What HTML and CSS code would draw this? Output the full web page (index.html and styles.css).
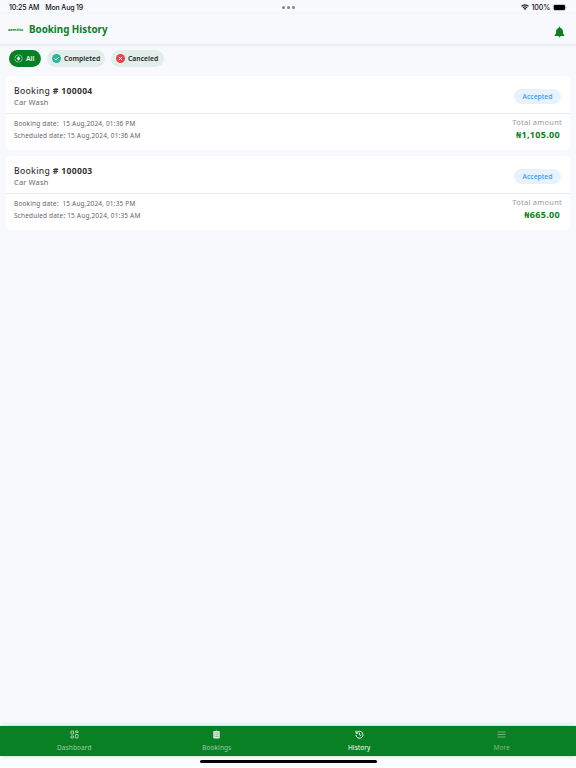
FILE: index.html
```html
<!DOCTYPE html>
<html lang="en">
<head>
    <meta charset="UTF-8">
    <meta name="viewport" content="width=device-width, initial-scale=1.0">
    <title>Booking History</title>
    <link rel="stylesheet" href="styles.css">
</head>
<body>

    <div class="status-bar">
        <div class="status-left">
            <span class="clock">10:25 AM</span>
            <span class="day">Mon Aug 19</span>
        </div>
        <div class="dots"><i></i><i></i><i></i></div>
        <div class="status-right">
            <svg class="wifi" viewBox="0 0 16 12">
                <path d="M1 4.600a9.800 9.800 0 0 1 14 0M3.800 7.600a6 6 0 0 1 8.400 0" fill="none" stroke="#111" stroke-width="2.200"/>
                <path d="M8 12L5.400 9.400a3.600 3.600 0 0 1 5.200 0z" fill="#111"/>
            </svg>
            <span class="percent">100%</span>
            <svg class="battery" viewBox="0 0 28 14">
                <rect x=".6" y="1" width="24.400" height="12" rx="3.600" fill="none" stroke="#999" stroke-width="1"/>
                <rect x="1.600" y="2" width="22.400" height="10" rx="2.600" fill="#000"/>
                <path d="M26.200 5v4q1.400-.6 1.400-2t-1.400-2z" fill="#999"/>
            </svg>
        </div>
    </div>

    <header class="header">
        <span class="logo">samiits</span>
        <h1>Booking History</h1>
        <svg class="bell" viewBox="0 0 24 24" fill="#0a8025">
            <path d="M12 0.600a1.800 1.800 0 0 0-1.800 1.800v.7C6.800 4 4.500 6.900 4.500 10.200v5.300L1.500 18.800v1.700h21v-1.700l-3-3.300v-5.300c0-3.300-2.300-6.200-5.700-7.100v-.7A1.800 1.800 0 0 0 12 .6zM9.600 21.400a2.400 2.400 0 0 0 4.800 0z"/>
        </svg>
    </header>

    <div class="filters">
        <button class="chip chip-all">
            <svg viewBox="0 0 20 20" fill="none" stroke="#b9e3c3">
                <circle cx="10" cy="10" r="8.300" stroke-width="1.500" stroke-dasharray="11 2"/>
                <path d="M10 4.500l4 5.500-4 5.500L6 10z" fill="#b9e3c3" stroke="none"/>
                <path d="M10 7v6M7 10h6" stroke="#fff" stroke-width="1.500"/>
            </svg>
            <span>All</span>
        </button>
        <button class="chip chip-completed">
            <svg viewBox="0 0 20 20">
                <circle cx="10" cy="10" r="9.900" fill="#2fb59a"/>
                <path d="M5.800 10.300l3 2.900 5.600-5.900" fill="none" stroke="#fff" stroke-width="2.200"/>
            </svg>
            <span>Completed</span>
        </button>
        <button class="chip chip-canceled">
            <svg viewBox="0 0 20 20">
                <circle cx="10" cy="10" r="9.900" fill="#ee3f49"/>
                <path d="M6.300 6.300l7.400 7.400M13.700 6.300l-7.400 7.400" fill="none" stroke="#fff" stroke-width="2.200"/>
            </svg>
            <span>Canceled</span>
        </button>
    </div>

    <main class="bookings">
        <div class="card">
            <div class="card-top">
                <div>
                    <h2>Booking <b># 100004</b></h2>
                    <p class="service">Car Wash</p>
                </div>
                <span class="status">Accepted</span>
            </div>
            <div class="card-bottom">
                <div class="dates">
                    <p class="booked"><span>Booking date:</span> 15 Aug,2024, 01:36 PM</p>
                    <p><span>Scheduled date:</span> 15 Aug,2024, 01:36 AM</p>
                </div>
                <div class="amount">
                    <p class="label">Total amount</p>
                    <p class="price">₦1,105.00</p>
                </div>
            </div>
        </div>

        <div class="card">
            <div class="card-top">
                <div>
                    <h2>Booking <b># 100003</b></h2>
                    <p class="service">Car Wash</p>
                </div>
                <span class="status">Accepted</span>
            </div>
            <div class="card-bottom">
                <div class="dates">
                    <p class="booked"><span>Booking date:</span> 15 Aug,2024, 01:35 PM</p>
                    <p><span>Scheduled date:</span> 15 Aug,2024, 01:35 AM</p>
                </div>
                <div class="amount">
                    <p class="label">Total amount</p>
                    <p class="price">₦665.00</p>
                </div>
            </div>
        </div>
    </main>

    <nav class="nav">
        <a class="nav-item">
            <svg viewBox="0 0 18 18" fill="none" stroke="currentColor" stroke-width="2">
                <path d="M2 2h5v6H2zM11 2h5v3h-5zM11 9h5v7h-5zM2 12h5v4H2z"/>
            </svg>
            <span>Dashboard</span>
        </a>
        <a class="nav-item">
            <svg viewBox="0 0 18 18">
                <path d="M4 2h3q2-2 4 0h3q1.500 0 1.500 1.500v12q0 1.500-1.500 1.500H4q-1.500 0-1.500-1.500v-12Q2.500 2 4 2z" fill="#d5ead8"/>
                <path d="M5 6h2M8.500 6H13M5 9.500h2M8.500 9.500H13M5 13h2M8.500 13H13" stroke="#5d9c68" stroke-width="1.200"/>
            </svg>
            <span>Bookings</span>
        </a>
        <a class="nav-item active">
            <svg viewBox="0 0 18 18" fill="none" stroke="currentColor" stroke-width="1.900">
                <path d="M3.200 5.600A7 7 0 1 1 2 9.800M2 1.500v4.800h4.800M9 5.500v4l3 1.800"/>
            </svg>
            <span>History</span>
        </a>
        <a class="nav-item more">
            <svg viewBox="0 0 18 18" fill="none" stroke="currentColor" stroke-width="1.800">
                <path d="M1 4h16M1 9h16M1 14h16"/>
            </svg>
            <span>More</span>
        </a>
    </nav>

    <div class="home-area">
        <div class="home-bar"></div>
    </div>

</body>
</html>
```

FILE: styles.css
```css
* {
    box-sizing: border-box;
}

body {
    margin: 0;
    height: 768px;
    display: flex;
    flex-direction: column;
    overflow: hidden;
    background: #f7f9fd;
    font-family: "Noto Sans", "Open Sans", sans-serif;
    color: #222;
}

h1, h2, p {
    margin: 0;
}

svg {
    display: block;
    flex: none;
}

span {
    white-space: nowrap;
}

/* Status bar */
.status-bar {
    height: 14px;
    display: grid;
    grid-template-columns: 1fr auto 1fr;
    align-items: center;
    padding: 0 9px;
    font-family: Inter, sans-serif;
    font-size: 7px;
    font-weight: 500;
    color: #111;
}

.status-left {
    display: flex;
    gap: 6px;
    letter-spacing: -0.15px;
}

.dots {
    display: flex;
    gap: 2px;
}

.dots i {
    width: 3px;
    height: 3px;
    border-radius: 50%;
    background: #808387;
}

.status-right {
    display: flex;
    justify-content: flex-end;
    align-items: center;
    gap: 3px;
    letter-spacing: -0.1px;
}

.wifi {
    width: 8px;
    height: 6px;
}

.battery {
    width: 14px;
    height: 7px;
}

/* Header */
.header {
    height: 30px;
    display: flex;
    align-items: center;
    padding: 0 11px 0 8px;
    box-shadow: 0 1px 3px rgba(20, 70, 60, 0.12);
    color: #0a8025;
}

.logo {
    width: 21px;
    font-size: 4.2px;
    font-weight: 700;
}

.header h1 {
    margin-top: 2px;
    font-size: 9.8px;
    line-height: 14px;
    font-weight: 700;
}

.bell {
    width: 11px;
    height: 12px;
    margin-left: auto;
    margin-top: 6px;
}

/* Filter chips */
.filters {
    display: flex;
    gap: 6px;
    padding: 6px 9px 0;
    height: 32px;
}

.chip {
    height: 17px;
    display: flex;
    align-items: center;
    gap: 3px;
    padding: 0 5px;
    border: none;
    border-radius: 9px;
    background: #e2eeea;
    font-family: inherit;
    font-size: 6.8px;
    font-weight: 600;
    color: #222;
}

.chip svg {
    width: 9px;
    height: 9px;
}

.chip-all {
    width: 32px;
    background: #0a8025;
    color: #eaf6ec;
}

.chip-completed {
    width: 58px;
}

.chip-canceled {
    width: 53px;
}

/* Booking cards */
.bookings {
    flex: 1;
    display: flex;
    flex-direction: column;
    gap: 6px;
    padding: 0 6px;
}

.card {
    height: 74px;
    border-radius: 5px;
    background: #fff;
}

.card-top {
    height: 38px;
    display: flex;
    justify-content: space-between;
    padding: 8px 9px 0 8px;
    border-bottom: 1px solid #e6ebed;
}

.card h2 {
    margin-top: 1px;
    font-size: 8.6px;
    line-height: 13px;
    font-weight: 500;
    letter-spacing: 0.32px;
    color: #333;
}

.service {
    margin-top: -1px;
    font-size: 7.5px;
    line-height: 11px;
    letter-spacing: 0.15px;
    color: #666;
}

.status {
    width: 47px;
    height: 15px;
    margin-top: 5px;
    border-radius: 8px;
    background: #e8f2fe;
    font-size: 6.8px;
    line-height: 15px;
    font-weight: 500;
    text-align: center;
    color: #3f95ee;
}

.card-bottom {
    display: flex;
    justify-content: space-between;
    padding: 4px 8px 0;
}

.dates {
    font-size: 6.5px;
    line-height: 12px;
    letter-spacing: 0.17px;
    color: #666;
}

.booked span {
    margin-right: 2px;
}

.amount {
    margin-top: -2px;
    text-align: right;
}

.label {
    font-size: 7.5px;
    line-height: 12px;
    letter-spacing: 0.25px;
    color: #999;
}

.price {
    margin-top: 1px;
    padding-right: 2px;
    font-size: 9px;
    line-height: 12px;
    font-weight: 700;
    letter-spacing: 0.32px;
    color: #0a8025;
}

/* Bottom navigation */
.nav {
    height: 30px;
    display: flex;
    padding: 0 3px;
    background: #0a8025;
    box-shadow: 0 0 4px rgba(10, 128, 37, 0.3);
    z-index: 1;
}

.nav-item {
    flex: 1;
    display: flex;
    flex-direction: column;
    align-items: center;
    padding-top: 4px;
    gap: 4px;
    font-size: 6.5px;
    line-height: 10px;
    letter-spacing: 0.1px;
    color: #9bcca4;
}

.nav-item svg {
    width: 9px;
    height: 9px;
}

.active {
    color: #fff;
}

.more {
    color: #82b889;
}

.home-area {
    height: 12px;
    padding-top: 4px;
    background: #fcfdfe;
}

.home-bar {
    width: 177px;
    height: 3px;
    margin: 0 auto;
    border-radius: 2px;
    background: #000;
}
```
